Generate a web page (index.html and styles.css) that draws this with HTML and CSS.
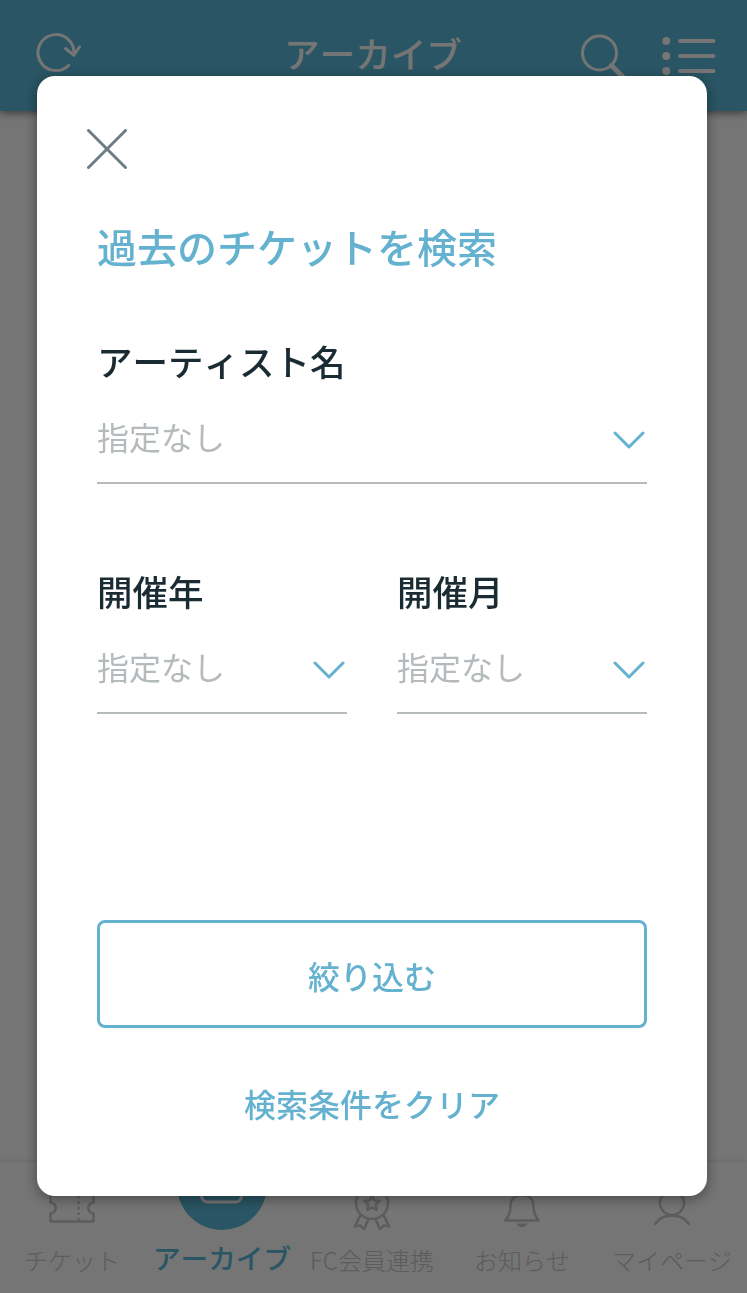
FILE: index.html
```
<!doctype html>
<html lang="ja">
	<head>
		<meta charset="utf-8">
		<title>アーカイブ</title>
		<link rel="stylesheet" href="styles.css">
	</head>
	<body>

		<div id="app">
			<header>
				<svg class="icon-reload" width="50" height="46" viewBox="0 0 50 46">
					<path d="M36.8 34.2A18 18 0 1 1 41.8 24" />
					<path d="M33.5 17.5L41.8 24.2L47.5 16" />
				</svg>
				<h1>アーカイブ</h1>
				<svg class="icon-search" width="50" height="50" viewBox="0 0 50 50">
					<circle cx="22.5" cy="22" r="17" />
					<path class="handle" d="M34.5 34.5L48 48" />
				</svg>
				<svg class="icon-list" width="56" height="40" viewBox="0 0 56 40">
					<circle cx="4.3" cy="5" r="4" />
					<circle cx="4.3" cy="20" r="4" />
					<circle cx="4.3" cy="35" r="4" />
					<path d="M18 5H51.5M18 20H51.5M18 35H51.5" />
				</svg>
			</header>

			<main></main>

			<nav>
				<div class="tab">
					<svg width="48" height="48" viewBox="0 0 48 48">
						<path d="M2.5 11H45.5V20.5C38.5 22 38.5 30 45.5 31.5V39.5H2.5V31.5C9.5 30 9.5 22 2.5 20.5Z" />
						<path class="dots" d="M30.5 14V39" />
					</svg>
					<span>チケット</span>
				</div>
				<div class="tab active">
					<svg width="90" height="90" viewBox="0 0 90 90">
						<circle class="disc" cx="45" cy="45" r="45" />
						<rect x="24.5" y="32" width="40" height="30" rx="6" />
					</svg>
					<span>アーカイブ</span>
				</div>
				<div class="tab">
					<svg width="48" height="48" viewBox="0 0 48 48">
						<circle cx="24" cy="21" r="16" />
						<path d="M24 13.5L26.3 18.4L31.6 19L27.7 22.6L28.8 28L24 25.3L19.2 28L20.3 22.6L16.4 19L21.7 18.4Z" />
						<path d="M12 34L7 44.5L12.5 43.5L16 47.5L20.5 37M36 34L41 44.5L35.5 43.5L32 47.5L27.5 37" />
					</svg>
					<span>FC会員連携</span>
				</div>
				<div class="tab">
					<svg width="48" height="48" viewBox="0 0 48 48">
						<path d="M24 13C17 13 12.5 17 12.5 24C12.5 31 10.5 34 7.5 38.5H40.5C37.5 34 35.5 31 35.5 24C35.5 17 31 13 24 13Z" />
						<path class="clapper" d="M19 41.5H29C28 46.5 20 46.5 19 41.5Z" />
					</svg>
					<span>お知らせ</span>
				</div>
				<div class="tab">
					<svg width="48" height="48" viewBox="0 0 48 48">
						<circle cx="24" cy="21" r="12" />
						<path d="M7 42C14.5 30.5 33.5 30.5 41 42" />
					</svg>
					<span>マイページ</span>
				</div>
			</nav>
		</div>

		<div id="overlay">
			<form id="search">
				<svg class="close" width="40" height="40" viewBox="0 0 40 40">
					<path d="M1.5 1.5L38.5 38.5M38.5 1.5L1.5 38.5" />
				</svg>
				<h2>過去のチケットを検索</h2>

				<div class="field">
					<div class="label">アーティスト名</div>
					<div class="select">
						<span>指定なし</span>
						<svg width="32" height="20" viewBox="0 0 32 20"><path d="M2 3L16 17L30 3" /></svg>
					</div>
				</div>

				<div class="row">
					<div class="field">
						<div class="label">開催年</div>
						<div class="select">
							<span>指定なし</span>
							<svg width="32" height="20" viewBox="0 0 32 20"><path d="M2 3L16 17L30 3" /></svg>
						</div>
					</div>
					<div class="field">
						<div class="label">開催月</div>
						<div class="select">
							<span>指定なし</span>
							<svg width="32" height="20" viewBox="0 0 32 20"><path d="M2 3L16 17L30 3" /></svg>
						</div>
					</div>
				</div>

				<div class="button">絞り込む</div>
				<div class="clear">検索条件をクリア</div>
			</form>
		</div>

	</body>
</html>
```
FILE: styles.css
```
* {
	margin: 0;
	padding: 0;
	box-sizing: border-box;
}

html,
body {
	height: 100%;
	overflow: hidden;
}

body {
	background: white;
	font-family: "Noto Sans CJK JP", sans-serif;
	font-kerning: none;
	color: #1b2b33;
}

svg {
	display: block;
	flex: none;
	fill: none;
	stroke-linecap: round;
	stroke-linejoin: round;
}

#app {
	height: 100%;
	display: flex;
	flex-direction: column;
}

header {
	display: grid;
	grid-template-columns: 137px 1fr 85px 85px;
	align-items: start;
	height: 111px;
	padding: 31px 0 0 32px;
	background: #5bb9d9;
	box-shadow: 0 2px 8px rgba(0,0,0,0.5);
	color: white;
}
	header svg {
		stroke: #fff;
		stroke-width: 3;
	}
	header h1 {
		font-size: 35.6px;
		line-height: 44px;
		font-weight: 500;
		text-align: center;
	}
	header .handle {
		stroke-width: 5;
	}
	header .icon-list {
		margin-top: 5px;
		stroke-width: 4;
	}
	header .icon-list circle {
		fill: #fff;
		stroke: none;
	}

main {
	flex: 1;
}

nav {
	display: grid;
	grid-template-columns: repeat(5, 150px);
	height: 131px;
	margin-left: -3px;
	padding-top: 20px;
	background: white;
	box-shadow: 0 -1px 4px rgba(0,0,0,0.1);
}

.tab {
	display: flex;
	flex-direction: column;
	align-items: center;
	font-size: 24px;
	line-height: 34px;
	font-weight: 300;
	color: #c8c8c8;
	white-space: nowrap;
}
	.tab svg {
		margin-bottom: 13px;
		stroke: #c8c8c8;
		stroke-width: 2.5;
	}
	.tab .dots {
		stroke-dasharray: 2.5 3;
		stroke-linecap: butt;
	}
	.tab .clapper {
		fill: #c8c8c8;
		stroke: none;
	}
	.tab.active {
		font-size: 27.6px;
		font-weight: 500;
		color: #5bb9d9;
	}
	.tab.active svg {
		margin-top: -42px;
		margin-bottom: 10px;
		stroke: white;
		stroke-width: 3;
	}
	.tab .disc {
		fill: #5bb9d9;
		stroke: none;
	}

#overlay {
	position: fixed;
	top: 0;
	left: 0;
	right: 0;
	bottom: 0;
	padding: 76px 40px 0 37px;
	background: rgba(0,0,0,0.54);
}

#search {
	display: flex;
	flex-direction: column;
	height: 1120px;
	padding: 53px 60px 0;
	background: white;
	border-radius: 18px;
	box-shadow: 0 3px 14px rgba(0,0,0,0.4);
}
	#search .close {
		margin-left: -10px;
		stroke: #6d7d85;
		stroke-width: 3;
	}
	#search h2 {
		margin: 47px 0 62px;
		font-size: 40px;
		line-height: 60px;
		font-weight: 500;
		color: #64b2d0;
	}

.field {
	flex: none;
}
	.label {
		margin-top: -2px;
		font-size: 35.5px;
		line-height: 50px;
		font-weight: 500;
	}
	.select {
		display: flex;
		align-items: center;
		justify-content: space-between;
		height: 90px;
		margin-top: 8px;
		padding-right: 2px;
		border-bottom: 2px solid #b5babd;
		font-size: 32px;
		color: #b5babd;
	}
	.select span {
		margin-top: -5px;
	}
	.select svg {
		margin-top: 3px;
		stroke: #64b2d0;
		stroke-width: 3;
	}

.row {
	display: grid;
	grid-template-columns: 1fr 1fr;
	gap: 50px;
	margin-top: 84px;
}

.button {
	height: 108px;
	margin-top: 206px;
	border: 3px solid #64b2d0;
	border-radius: 8px;
	font-size: 32px;
	line-height: 104px;
	font-weight: 500;
	text-align: center;
	color: #64b2d0;
}

.clear {
	margin-top: 50px;
	font-size: 32px;
	line-height: 50px;
	font-weight: 500;
	text-align: center;
	color: #64b2d0;
}
```
